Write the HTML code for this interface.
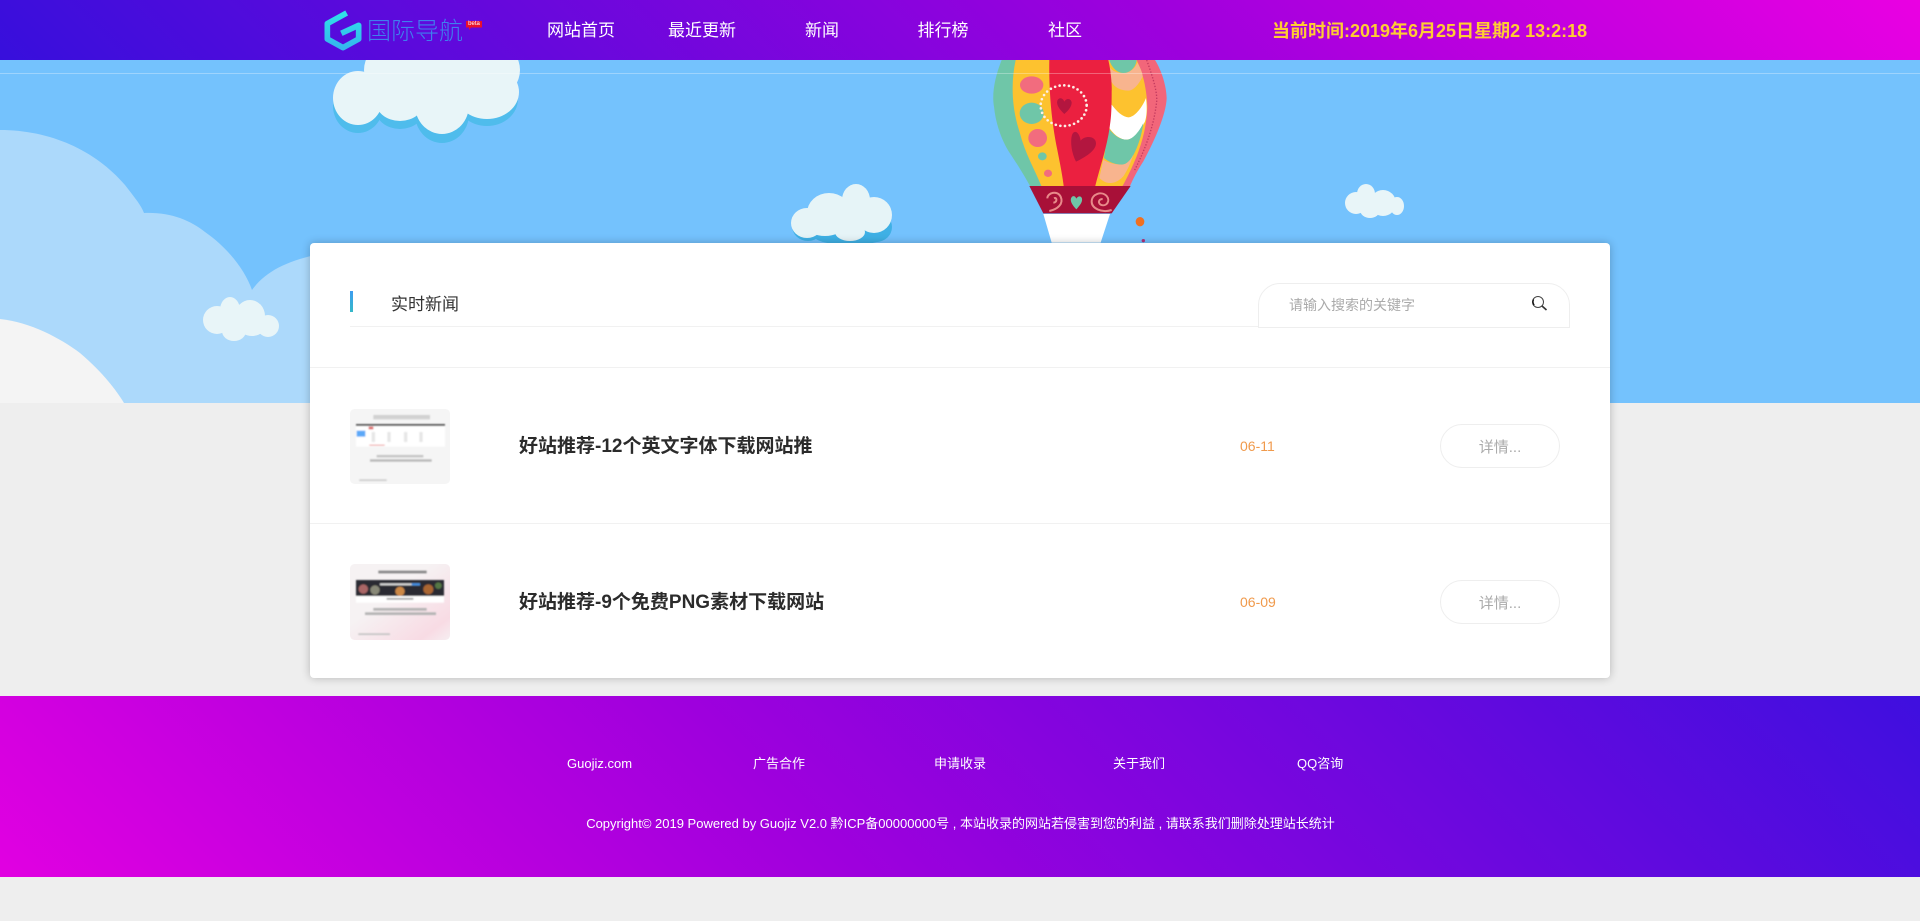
<!DOCTYPE html>
<html lang="zh-CN">
<head>
<meta charset="utf-8">
<title>国际导航</title>
<style>
html,body{margin:0;padding:0;width:1920px;height:921px;overflow:hidden;background:#eee;font-family:"Liberation Sans","Noto Sans CJK SC",sans-serif}
.a{position:absolute;white-space:nowrap}
#sky{position:absolute;left:0;top:0;width:1920px;height:403px;background:#74c2fd;overflow:hidden}
#head{position:absolute;left:0;top:0;width:1920px;height:60px;background:linear-gradient(45deg,#370fdc 0%,#a000dd 62%,#ea00e2 100%)}
#head .n{position:absolute;top:18px;line-height:25px;font-size:17px;color:#fff;text-align:center;width:100px}
#time{left:1272px;top:19px;line-height:24px;font-size:18px;font-weight:bold;color:#ffcc33}
#card{position:absolute;left:310px;top:243px;width:1300px;height:435px;background:#fff;border-radius:4px;box-shadow:0 0 9px rgba(0,0,0,.24)}
.line{position:absolute;height:1px;background:#f1f1f1}
.title{left:519px;font-size:19px;font-weight:bold;color:#2b2b2b;line-height:28px}
.date{left:1240px;font-size:14px;color:#f09a4c;line-height:20px}
.btn{position:absolute;left:1440px;width:118px;height:42px;border:1px solid #eee;border-radius:22px;color:#aaa;font-size:15px;line-height:45px;text-align:center}
#foot{position:absolute;left:0;top:696px;width:1920px;height:181px;background:linear-gradient(45deg,#e100e1 0%,#a000dd 40%,#3f0fdf 100%)}
.fl{font-size:13px;color:#fff;line-height:18px}
</style>
</head>
<body>
<div id="sky">
<svg width="1920" height="403" viewBox="0 0 1920 403" style="position:absolute;left:0;top:0">
  <!-- big left clouds -->
  <path d="M0 130C50 130 95 150 125 185C135 198 141 205 144 213C170 212 190 220 205 232C228 248 245 270 252 290C265 272 285 262 315 255V403H0Z" fill="#acd9fb"/>
  <path d="M0 319C30 322 60 338 80 353C100 370 115 388 124 403H0Z" fill="#f4f4f4"/>
  <!-- cloud 1 -->
  <g fill="#4fbcec">
    <ellipse cx="358" cy="106" rx="25" ry="27"/><ellipse cx="400" cy="108" rx="25" ry="21"/>
    <ellipse cx="442" cy="114" rx="27" ry="29"/><ellipse cx="487" cy="99" rx="31" ry="27"/>
  </g>
  <g fill="#e8f5f8">
    <ellipse cx="358" cy="98" rx="25" ry="27"/><ellipse cx="442" cy="70" rx="78" ry="46"/>
    <ellipse cx="400" cy="100" rx="25" ry="21"/><ellipse cx="442" cy="105" rx="27" ry="29"/>
    <ellipse cx="487" cy="92" rx="32" ry="27"/>
  </g>
  <!-- cloud 2 -->
  <g fill="#3fb0e5">
    <ellipse cx="808" cy="226" rx="16" ry="15"/><ellipse cx="850" cy="236" rx="36" ry="9"/><ellipse cx="876" cy="227" rx="16" ry="15"/>
  </g>
  <g fill="#e6f4f7">
    <ellipse cx="807" cy="223" rx="16" ry="15"/><ellipse cx="829" cy="213" rx="22" ry="20"/>
    <ellipse cx="856" cy="200" rx="14" ry="16"/><ellipse cx="874" cy="215" rx="18" ry="18"/>
    <ellipse cx="850" cy="232" rx="15" ry="9"/><ellipse cx="850" cy="218" rx="20" ry="16"/>
    <ellipse cx="825" cy="226" rx="18" ry="10"/>
  </g>
  <!-- cloud 3 -->
  <g fill="#e8f5f8">
    <ellipse cx="1356" cy="203" rx="11" ry="11"/><ellipse cx="1366" cy="194" rx="9" ry="10"/>
    <ellipse cx="1383" cy="203" rx="13" ry="13"/><ellipse cx="1397" cy="206" rx="7" ry="9"/>
    <ellipse cx="1370" cy="210" rx="10" ry="8"/><ellipse cx="1370" cy="203" rx="12" ry="9"/>
  </g>
  <!-- cloud 4 -->
  <g fill="#e8f5f8">
    <ellipse cx="217" cy="320" rx="14" ry="14"/><ellipse cx="230" cy="310" rx="10" ry="13"/>
    <ellipse cx="250" cy="316" rx="15" ry="16"/><ellipse cx="268" cy="326" rx="11" ry="11"/>
    <ellipse cx="234" cy="331" rx="12" ry="10"/><ellipse cx="235" cy="320" rx="14" ry="11"/>
    <ellipse cx="252" cy="328" rx="12" ry="8"/>
  </g>
  <!-- balloon -->
  <g transform="translate(970 50) scale(.33333)">
    <path d="M95 30C75 80 65 130 72 170C78 230 100 280 120 310C140 340 165 380 180 408L240 408L240 30Z" fill="#6fc6a8"/>
    <path d="M137 30C122 100 125 175 150 250C165 310 195 360 215 410L285 415L260 200L238 30Z" fill="#fdc22f"/>
    <path d="M500 30L555 30C580 70 590 120 590 145C588 190 560 260 520 334C500 365 490 385 480 408L440 410Z" fill="#f2667a"/>
    <path d="M415 30L500 30C520 70 530 120 532 170C530 240 510 310 462 400L455 412L374 415L400 200Z" fill="#fdc22f"/>
    <path d="M420 54C432 66 446 69 460 69C482 69 497 52 502 38C512 55 518 70 518 80C505 105 490 122 475 122C455 122 435 115 424 95Z" fill="#f8b48e"/>
    <path d="M418 30H500C498 50 482 69 460 69C440 69 424 50 418 30Z" fill="#6fc6a8"/>
    <path d="M425 164C440 185 460 202 475 202C495 202 518 170 528 144C532 175 530 200 525 214C510 245 490 269 470 269C445 269 425 245 415 229Z" fill="#fff"/>
    <path d="M415 234C430 255 450 269 470 269C490 269 510 240 520 219C515 260 500 300 485 324C475 338 465 344 455 344C435 344 415 335 402 324Z" fill="#6fc6a8"/>
    <path d="M400 329C415 340 440 344 455 344C470 344 482 330 490 314C482 340 470 365 460 379C445 395 430 399 420 399C405 399 395 390 388 384Z" fill="#f8b48e"/>
    <path d="M530 30C552 90 562 130 560 154C552 230 525 300 492 364" fill="none" stroke="#c23a5e" stroke-width="4" stroke-dasharray="4 5"/>
    <path d="M238 30H415C424 70 426 110 425 124C425 170 424 200 420 224C412 290 390 350 374 415H282C278 380 270 340 262 300C245 220 236 120 238 30Z" fill="#eb2040"/>
    <ellipse cx="185" cy="105" rx="35" ry="26" fill="#f26c7e"/>
    <ellipse cx="185" cy="190" rx="36" ry="32" fill="#6fc6a8"/>
    <ellipse cx="203" cy="264" rx="28" ry="27" fill="#f26c7e"/>
    <ellipse cx="217" cy="319" rx="13" ry="12" fill="#6fc6a8"/>
    <ellipse cx="234" cy="370" rx="12" ry="11" fill="#f26c7e"/>
    <ellipse cx="281" cy="167" rx="69" ry="61" fill="none" stroke="#fdeee6" stroke-width="8" stroke-linecap="round" stroke-dasharray="0 14"/>
    <path d="M283 192C270 180 258 165 262 152C266 142 278 142 283 155C290 142 304 146 305 158C305 170 295 182 283 192Z" fill="#b3163f"/>
    <path d="M318 335C305 310 300 275 306 255C312 238 328 245 332 272C345 255 378 258 378 280C378 302 345 322 318 335Z" fill="#b3163f"/>
    <path d="M178 408H482L425 490H220Z" fill="#a81038"/>
    <path d="M232 445C232 428 262 420 272 440C282 462 262 478 238 483M252 445C262 440 262 458 250 458" fill="none" stroke="#e88a8a" stroke-width="6"/>
    <path d="M425 480C395 490 365 475 365 455C365 432 395 422 410 438C422 452 410 472 392 464C382 458 388 445 398 448" fill="none" stroke="#e88a8a" stroke-width="6"/>
    <path d="M319 478C308 466 300 455 303 445C307 435 316 437 319 446C324 437 334 437 336 446C338 456 330 466 319 478Z" fill="#6fc6a8"/>
    <path d="M220 492H420L392 578H245Z" fill="#fff"/>
    <ellipse cx="510" cy="515" rx="13" ry="14" fill="#f07020"/>
    <circle cx="520" cy="572" r="5" fill="#b0307a"/>
  </g>
  <rect x="0" y="73" width="1920" height="1" fill="#fff" opacity=".3"/>
</svg>
</div>

<div id="head">
  <svg class="a" style="left:318px;top:4px" width="60" height="52" viewBox="0 0 180 156">
    <defs><linearGradient id="lg" x1="0" y1="0" x2="0" y2="1"><stop offset="0" stop-color="#2fe2e8"/><stop offset="1" stop-color="#35b6ee"/></linearGradient></defs>
    <path d="M86 27L28 59V105L75 131L122 105V64L70 88" fill="none" stroke="url(#lg)" stroke-width="17" stroke-linejoin="round"/>
  </svg>
  <svg class="a" style="left:466px;top:21px" width="17" height="10" viewBox="0 0 17 10"><path d="M0 0H16V6.500H5L3 9V6.500H0Z" fill="#e8102a"/></svg>
  <span class="a" style="left:367px;top:15px;font-size:24px;line-height:34px;color:#3f7fee;font-weight:300">国际导航</span>
  <span class="a" style="left:466px;top:20.500px;width:16px;text-align:center;font-size:6px;line-height:7px;color:#fff">beta</span>
  <span class="n" style="left:531px">网站首页</span>
  <span class="n" style="left:652px">最近更新</span>
  <span class="n" style="left:772px">新闻</span>
  <span class="n" style="left:893px">排行榜</span>
  <span class="n" style="left:1015px">社区</span>
  <span class="a" id="time">当前时间:2019年6月25日星期2 13:2:18</span>
</div>

<div id="card"></div>

<!-- section title -->
<div class="a" style="left:350px;top:291px;width:3px;height:21px;background:linear-gradient(#3d9cf0,#35b8c8)"></div>
<span class="a" style="left:391px;top:292px;font-size:17px;line-height:26px;color:#333">实时新闻</span>
<div class="line" style="left:350px;top:326px;width:908px"></div>

<!-- search -->
<div class="a" style="left:1258px;top:283px;width:310px;height:43px;border:1px solid #eee;border-radius:22px 22px 0 0;background:#fff;box-sizing:content-box"></div>
<span class="a" style="left:1289px;top:294px;font-size:14px;line-height:22px;color:#aaa">请输入搜索的关键字</span>
<svg class="a" style="left:1530px;top:294px" width="18" height="18" viewBox="0 0 18 18">
  <circle cx="8" cy="8" r="5.500" fill="none" stroke="#444" stroke-width="1"/>
  <path d="M3.600 5.500A5 5 0 0 0 4.200 11" fill="none" stroke="#111" stroke-width="1.300"/>
  <path d="M12 12L16.500 16" stroke="#333" stroke-width="1.600"/>
</svg>

<div class="line" style="left:310px;top:367px;width:1300px"></div>
<div class="line" style="left:310px;top:523px;width:1300px"></div>

<!-- row 1 -->
<svg class="a" style="left:350px;top:409px" width="100" height="75" viewBox="60 27 300 225">
  <defs><filter id="b" x="-10%" y="-50%" width="120%" height="200%"><feGaussianBlur stdDeviation="2"/></filter></defs>
  <rect x="60" y="27" width="300" height="225" rx="14" fill="#f5f5f5"/>
  <g filter="url(#b)">
    <rect x="130" y="45" width="170" height="13" fill="#d2d2d2"/>
    <rect x="78" y="72" width="267" height="68" fill="#fff"/>
    <rect x="78" y="72" width="267" height="6" fill="#555"/>
    <rect x="80" y="92" width="26" height="18" fill="#5aa8f8"/>
    <rect x="116" y="80" width="14" height="8" fill="#d66"/>
    <rect x="125" y="96" width="10" height="30" fill="#e6e6e6"/>
    <rect x="172" y="96" width="10" height="30" fill="#e6e6e6"/>
    <rect x="222" y="96" width="10" height="30" fill="#e6e6e6"/>
    <rect x="268" y="96" width="10" height="30" fill="#e6e6e6"/>
    <rect x="118" y="134" width="46" height="3" fill="#e99"/>
    <rect x="140" y="165" width="140" height="7" fill="#c4c4c4"/>
    <rect x="120" y="178" width="185" height="7" fill="#b8b8b8"/>
    <rect x="88" y="238" width="82" height="5" fill="#ccc"/>
  </g>
</svg>
<span class="a title" style="top:433px">好站推荐-12个英文字体下载网站推</span>
<span class="a date" style="top:436px">06-11</span>
<div class="btn" style="top:424px">详情...</div>

<!-- row 2 -->
<svg class="a" style="left:350px;top:564px" width="100" height="76" viewBox="60 30 300 228">
  <defs>
    <linearGradient id="p" x1="0" y1="0" x2="1" y2="1"><stop offset=".4" stop-color="#f6f2f3"/><stop offset=".85" stop-color="#f8dbe4"/><stop offset="1" stop-color="#f6eef1"/></linearGradient>
  </defs>
  <rect x="60" y="30" width="300" height="228" rx="14" fill="url(#p)"/>
  <g filter="url(#b)">
    <rect x="145" y="50" width="145" height="8" fill="#888"/>
    <rect x="78" y="78" width="264" height="48" fill="#2c2a30"/>
    <circle cx="100" cy="105" r="14" fill="#a66"/><circle cx="135" cy="108" r="14" fill="#887"/>
    <circle cx="210" cy="112" r="14" fill="#c84"/><circle cx="295" cy="106" r="15" fill="#a63"/><circle cx="325" cy="95" r="10" fill="#574"/>
    <rect x="150" y="88" width="120" height="6" fill="#ddd"/><rect x="245" y="88" width="25" height="6" fill="#3a8ee8"/>
    <rect x="78" y="126" width="264" height="20" fill="#fff"/>
    <rect x="170" y="132" width="80" height="5" fill="#999"/>
    <rect x="130" y="162" width="160" height="8" fill="#b4b4b4"/>
    <rect x="105" y="175" width="213" height="8" fill="#b4b4b4"/>
    <rect x="85" y="238" width="95" height="5" fill="#c4c4c4"/>
  </g>
</svg>
<span class="a title" style="top:589px">好站推荐-9个免费PNG素材下载网站</span>
<span class="a date" style="top:592px">06-09</span>
<div class="btn" style="top:580px">详情...</div>

<div id="foot">
  <span class="a fl" style="left:567px;top:59px">Guojiz.com</span>
  <span class="a fl" style="left:753px;top:59px">广告合作</span>
  <span class="a fl" style="left:934px;top:59px">申请收录</span>
  <span class="a fl" style="left:1113px;top:59px">关于我们</span>
  <span class="a fl" style="left:1297px;top:59px">QQ咨询</span>
  <span class="a fl" style="left:0;width:1921px;text-align:center;top:119px">Copyright© 2019 Powered by Guojiz V2.0 黔ICP备00000000号 , 本站收录的网站若侵害到您的利益 , 请联系我们删除处理站长统计</span>
</div>
</body>
</html>
